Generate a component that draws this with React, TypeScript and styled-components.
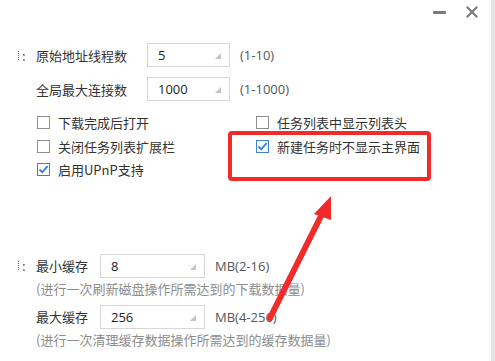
import styled, { createGlobalStyle } from "styled-components";

const Global = createGlobalStyle`
  html, body {
    margin: 0;
    padding: 0;
    background: #ffffff;
  }
  * { box-sizing: border-box; }
`;

const FONT = `"Noto Sans CJK SC", "Noto Sans", sans-serif`;

export default function App() {
  return (
    <>
      <Global />
      <Window>
        <TitleBar>
          <Minimize />
          <Close>
            <svg width="12" height="12" viewBox="0 0 12 12">
              <path d="M1.5 1.5 L10.5 10.5 M10.5 1.5 L1.5 10.5" stroke="#7a7a7a" strokeWidth="2.2" strokeLinecap="round" />
            </svg>
          </Close>
        </TitleBar>

        <Section>
          <FieldRow>
            <Marker $dots>:</Marker>
            <Label $w={111}>原始地址线程数</Label>
            <SpinInput $w={83}><span>5</span><Grip /></SpinInput>
            <Range>(1-10)</Range>
          </FieldRow>
          <FieldRow>
            <Marker />
            <Label $w={111}>全局最大连接数</Label>
            <SpinInput $w={83}><span>1000</span><Grip /></SpinInput>
            <Range>(1-1000)</Range>
          </FieldRow>
        </Section>

        <Checks>
          <Check><Box /><span>下载完成后打开</span></Check>
          <Check><Box /><span>任务列表中显示列表头</span></Check>
          <Check><Box /><span>关闭任务列表扩展栏</span></Check>
          <Check><Box $checked><Tick /></Box><span>新建任务时不显示主界面</span></Check>
          <Check><Box $checked><Tick /></Box><span>启用UPnP支持</span></Check>
        </Checks>

        <CacheSection>
          <CacheBlock>
            <FieldRow>
              <Marker $dots>:</Marker>
              <Label $w={64}>最小缓存</Label>
              <SpinInput $w={105}><span>8</span><Grip /></SpinInput>
              <Range>MB(2-16)</Range>
            </FieldRow>
            <Hint>(进行一次刷新磁盘操作所需达到的下载数据量)</Hint>
          </CacheBlock>
          <CacheBlock>
            <FieldRow>
              <Marker />
              <Label $w={64}>最大缓存</Label>
              <SpinInput $w={105}><span>256</span><Grip /></SpinInput>
              <Range>MB(4-256)</Range>
            </FieldRow>
            <Hint>(进行一次清理缓存数据操作所需达到的缓存数据量)</Hint>
          </CacheBlock>
        </CacheSection>

        <Highlight />
        <Arrow viewBox="0 0 495 361" width="495" height="361">
          <line x1="270" y1="318" x2="322" y2="214" stroke="#f22a2a" strokeWidth="6" strokeLinecap="round" />
          <polygon points="331,196 314,214 331,220" fill="#f22a2a" />
        </Arrow>
      </Window>
    </>
  );
}

function Tick() {
  return (
    <svg width="11" height="11" viewBox="0 0 11 11">
      <path d="M1.5 5.5 L4.3 8.3 L9.6 2.2" fill="none" stroke="#2f7fd8" strokeWidth="1.8" />
    </svg>
  );
}

const Window = styled.div`
  position: relative;
  width: 495px;
  height: 361px;
  overflow: hidden;
  background: #ffffff;
  border-right: 4px solid #e4e4e4;
  font-family: ${FONT};
  font-size: 13px;
  color: #333333;
`;

const TitleBar = styled.div`
  height: 24px;
  display: flex;
  justify-content: flex-end;
  align-items: center;
  gap: 20px;
  padding-right: 13px;
`;

const Minimize = styled.div`
  width: 13px;
  height: 3px;
  background: #7a7a7a;
  border-radius: 1px;
`;

const Close = styled.div`
  width: 12px;
  height: 12px;
  display: flex;
`;

const Section = styled.div`
  margin-top: 19px;
  display: flex;
  flex-direction: column;
  gap: 10px;
`;

const FieldRow = styled.div`
  display: flex;
  align-items: center;
  height: 24px;
`;

const Marker = styled.div<{ $dots?: boolean }>`
  width: 36px;
  padding-left: 18px;
  display: flex;
  align-items: center;
  gap: 2px;
  color: #555;
  font-size: 13px;
  &::before {
    content: "";
    display: ${(p) => (p.$dots ? "block" : "none")};
    width: 1px;
    height: 9px;
    border-left: 1.5px dotted #666;
  }
`;

const Label = styled.div<{ $w: number }>`
  width: ${(p) => p.$w}px;
  white-space: nowrap;
  color: #333;
`;

const SpinInput = styled.div<{ $w: number }>`
  position: relative;
  width: ${(p) => p.$w}px;
  height: 24px;
  border: 1px solid #d6d6d6;
  padding-left: 10px;
  display: flex;
  align-items: center;
  font-family: "Open Sans", "Noto Sans", sans-serif;
  font-size: 13px;
  color: #222;
`;

const Grip = styled.div`
  position: absolute;
  right: 8px;
  bottom: 7px;
  width: 0;
  height: 0;
  border-left: 6px solid transparent;
  border-bottom: 6px solid #c4c4c4;
`;

const Range = styled.div`
  margin-left: 10px;
  font-family: "Open Sans", "Noto Sans", sans-serif;
  font-size: 13px;
  color: #555;
  white-space: nowrap;
`;

const Checks = styled.div`
  margin-top: 10px;
  padding-left: 37px;
  display: grid;
  grid-template-columns: 219px 1fr;
  grid-auto-rows: 23.5px;
`;

const Check = styled.div`
  display: flex;
  align-items: center;
  gap: 8px;
  color: #333;
  white-space: nowrap;
`;

const Box = styled.div<{ $checked?: boolean }>`
  width: 13px;
  height: 13px;
  border: 1px solid ${(p) => (p.$checked ? "#3a82d8" : "#8e8e8e")};
  display: flex;
  align-items: center;
  justify-content: center;
  background: #fff;
`;

const CacheSection = styled.div`
  margin-top: 72px;
  display: flex;
  flex-direction: column;
  gap: 5px;
`;

const CacheBlock = styled.div`
  display: flex;
  flex-direction: column;
`;

const Hint = styled.div`
  padding-left: 36px;
  height: 22px;
  line-height: 22px;
  color: #8c8c8c;
  white-space: nowrap;
`;

const Highlight = styled.div`
  position: absolute;
  left: 228px;
  top: 131px;
  width: 203px;
  height: 50px;
  border: 4px solid #f22a2a;
  border-radius: 4px;
  pointer-events: none;
`;

const Arrow = styled.svg`
  position: absolute;
  left: 0;
  top: 0;
  pointer-events: none;
`;
